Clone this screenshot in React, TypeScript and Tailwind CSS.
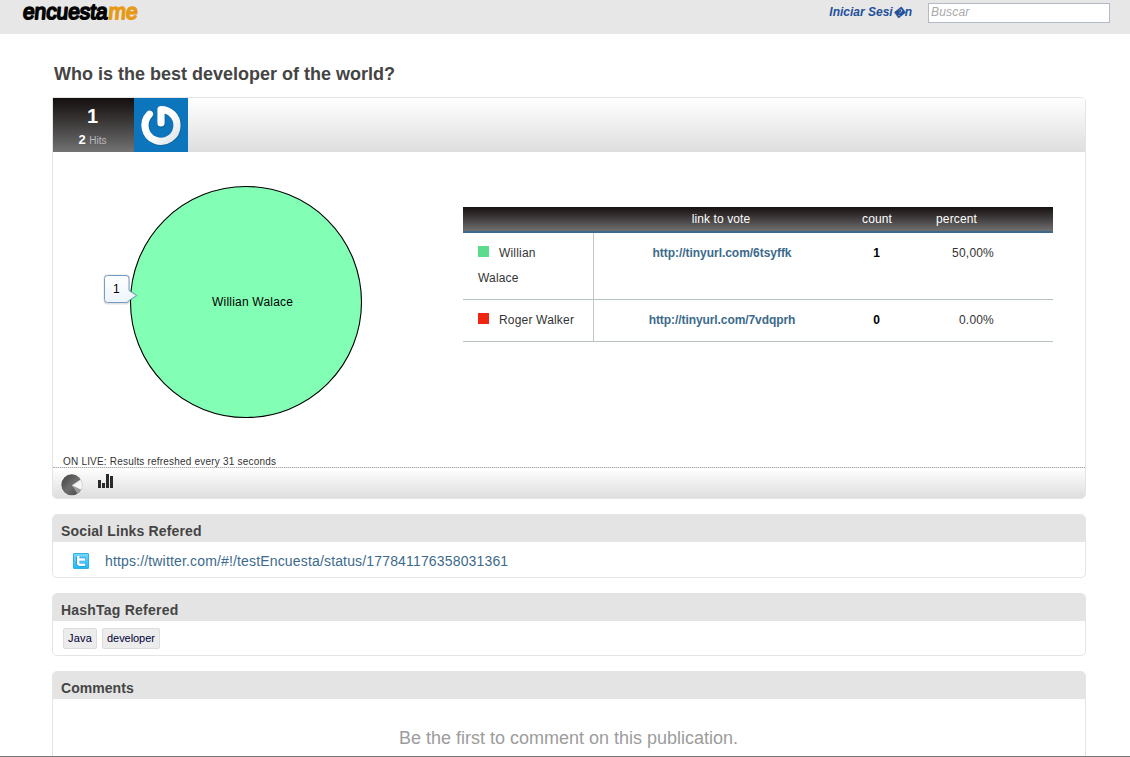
import type { ReactNode } from 'react';

const results = [
  { name: 'Willian Walace', swatch: 'bg-[#5bdb8c]', url: 'http://tinyurl.com/6tsyffk', tracking: 'tracking-[-0.04px]', count: 1, percent: '50,00%', height: 'h-[67px]' },
  { name: 'Roger Walker', swatch: 'bg-[#ee2611]', url: 'http://tinyurl.com/7vdqprh', tracking: 'tracking-[-0.08px]', count: 0, percent: '0.00%', height: 'h-[42px]' },
];

function Logo() {
  return (
    <svg width="120" height="28" viewBox="0 0 120 28" className="block overflow-visible" aria-label="encuestame">
      <g
        transform="translate(2.500 19.300) skewX(-5)"
        fontFamily="'Liberation Sans', Arial, sans-serif"
        fontSize="22"
        strokeWidth="1.800"
        strokeLinejoin="round"
      >
        <text x="0" y="0" fill="#050505" stroke="#050505" textLength="84.500" lengthAdjust="spacingAndGlyphs">encuesta</text>
        <text x="85.500" y="0" fill="#e69a17" stroke="#e69a17" textLength="29" lengthAdjust="spacingAndGlyphs">me</text>
      </g>
    </svg>
  );
}

function Avatar() {
  return (
    <svg width="54" height="54" viewBox="0 0 54 54" className="block bg-[#0c75bb]">
      <defs>
        <linearGradient id="ring" x1="0" y1="0" x2="1" y2="1">
          <stop offset="0.5" stopColor="#ffffff" />
          <stop offset="1" stopColor="#dfe3e6" />
        </linearGradient>
      </defs>
      <path d="M27 25.500V11.500C36 11.500 43 18.500 43 27.200A16 16 0 1 1 15.500 16" fill="none" stroke="#075488" strokeOpacity="0.5" strokeWidth="8" strokeLinecap="round" strokeLinejoin="round" transform="translate(.4 .6)" />
      <path d="M27 25V11.500C36 11.500 43 18.500 43 27.200A16 16 0 1 1 15.500 16.200" fill="none" stroke="url(#ring)" strokeWidth="7.200" strokeLinecap="round" strokeLinejoin="round" />
    </svg>
  );
}

function Pie() {
  return (
    <svg width="260" height="234" viewBox="0 0 260 234" className="block">
      <defs>
        <linearGradient id="tip" x1="0" y1="0" x2="0" y2="1">
          <stop offset="0" stopColor="#ffffff" />
          <stop offset="1" stopColor="#edf4fd" />
        </linearGradient>
      </defs>
      <circle cx="143" cy="117" r="115.500" fill="#82ffb4" stroke="#000" strokeWidth="1.100" />
      <text x="109" y="121" fontSize="12" fill="#000" textLength="81">Willian Walace</text>
      <path d="M4.500 90.500H23Q26 90.500 26 93.500V105.500L33.500 110.500L26 115.500Q25.500 118.500 23 118.500H4.500Q1.500 118.500 1.500 115.500V93.500Q1.500 90.500 4.500 90.500Z" fill="none" stroke="#000" strokeOpacity="0.12" strokeWidth="2" />
      <path d="M4.500 90.500H23Q26 90.500 26 93.500V105.500L33.500 110.500L26 115.500Q25.500 117.500 23 117.500H4.500Q1.500 117.500 1.500 114.500V93.500Q1.500 90.500 4.500 90.500Z" fill="url(#tip)" stroke="#759dc0" />
      <text x="10" y="108" fontSize="12" fill="#000">1</text>
    </svg>
  );
}

function PieIcon() {
  return (
    <svg width="22" height="22" viewBox="0 0 22 22" className="block">
      <defs>
        <linearGradient id="pieicon" x1="0" y1="0" x2="1" y2="1">
          <stop offset="0" stopColor="#3e3e3e" />
          <stop offset="0.5" stopColor="#6e6e6e" />
          <stop offset="1" stopColor="#444" />
        </linearGradient>
      </defs>
      <circle cx="10.800" cy="10.800" r="10.500" fill="url(#pieicon)" />
      <path d="M11 11.500L19.800 5.500A10.500 10.500 0 0 1 20 16Z" fill="#f5f5f5" stroke="#cfcfcf" strokeWidth="0.600" />
      <path d="M11 11.500L20 16Q18.500 18.800 16.500 19.800Z" fill="#9a9a9a" />
    </svg>
  );
}

function BarsIcon() {
  return (
    <svg width="15" height="14" viewBox="0 0 15 14" fill="#2a2a2a" className="block">
      <path d="M0 6h3v8H0zM4 9h3v5H4zM8 0h3v14H8zM12 2h3v12h-3z" />
    </svg>
  );
}

function TwitterIcon() {
  return (
    <svg width="16" height="16" viewBox="0 0 16 16" className="block">
      <defs>
        <linearGradient id="tw" x1="0" y1="0" x2="0" y2="1">
          <stop offset="0" stopColor="#7ad6fd" />
          <stop offset="1" stopColor="#1ab8fb" />
        </linearGradient>
      </defs>
      <rect x="0.500" y="0.500" width="15" height="15" rx="0.500" fill="url(#tw)" stroke="#2fb0e6" />
      <path d="M5 3.500V10Q5 11.800 7 11.800H12.500M5 6.200H12.500" fill="none" stroke="#1793cc" strokeWidth="3.600" />
      <path d="M5.200 3V10Q5.200 11.800 7 11.800H12.200M5.200 6.500H12.200" fill="none" stroke="#fff" strokeWidth="2.500" />
    </svg>
  );
}

function Section({ title, tracking, className, children }: { title: string; tracking: string; className: string; children: ReactNode }) {
  return (
    <section className={`overflow-hidden rounded-[5px] border border-[#e4e4e4] ${className}`}>
      <h2 className={`h-[27px] bg-[#e4e4e4] pl-2 text-sm leading-8 font-bold text-[#444] ${tracking}`}>{title}</h2>
      {children}
    </section>
  );
}

export default function App() {
  return (
    <div className="flex h-[757px] w-[1130px] flex-col overflow-hidden border-b border-[#777] bg-white font-['Liberation_Sans',Arial,sans-serif] text-[#333]">
      <header className="flex h-[34px] shrink-0 items-start bg-[#e7e7e7] pr-5 pl-5">
        <Logo />
        <a className="mt-1 mr-4 ml-auto text-xs leading-4 font-bold text-[#23509a] italic">Iniciar Sesi�n</a>
        <input
          placeholder="Buscar"
          className="mt-[3px] h-5 w-[182px] border border-[#b3b9c9] bg-white px-[2px] pb-0.5 text-xs tracking-[0.2px] italic outline-none placeholder:text-[#a9a9a9]"
        />
      </header>

      <main className="flex grow flex-col px-[52px] pr-11">
        <h1 className="mt-[29px] ml-0.5 h-[34px] text-lg leading-[22px] font-bold whitespace-nowrap text-[#444]">
          Who is the best developer of the world?
        </h1>

        <section className="flex h-[402px] shrink-0 flex-col overflow-hidden rounded-[5px] rounded-tl-none border border-[#e4e4e4]">
          <div className="flex h-[54px] shrink-0 bg-linear-to-b from-white to-[#dedede]">
            <div className="w-[81px] bg-linear-to-b from-[#151010] to-[#737373] pr-0.5 text-center text-white">
              <div className="pt-[7px] text-xl leading-[22px] font-bold">1</div>
              <div className="pt-[5px] text-[13px] leading-4 font-bold">
                2 <span className="text-[10px] font-normal text-[#bbb]">Hits</span>
              </div>
            </div>
            <Avatar />
          </div>

          <div className="flex grow">
            <div className="flex w-[410px] flex-col pt-[33px] pl-[50px]">
              <Pie />
            </div>
            <div className="w-[590px] pt-[55px] text-xs">
              <div className="grid h-[26px] grid-cols-[131px_254px_58px_147px] border-b-2 border-[#3c6a8c] bg-linear-to-b from-[#181112] to-[#717171] text-center leading-[25px] text-white">
                <span />
                <span className="tracking-[0.1px]">link to vote</span>
                <span className="tracking-[0.1px]">count</span>
                <span className="pl-[30px] text-left tracking-[0.15px]">percent</span>
              </div>
              {results.map((r) => (
                <div
                  key={r.name}
                  className={`grid grid-cols-[131px_254px_57px_148px] border-b border-[#b7c0c3] text-center leading-[25px] ${r.height}`}
                >
                  <div className="border-r border-[#c1c6c8] pt-2 pl-[15px] text-left">
                    <div className="w-[100px] tracking-[0.18px]">
                      <span className={`mr-2.5 inline-block size-[11px] ${r.swatch}`} />
                      {r.name}
                    </div>
                  </div>
                  <a className={`pt-2 pl-0.5 font-bold text-[#3c6a8c] ${r.tracking}`}>{r.url}</a>
                  <span className="pt-2 font-bold text-black">{r.count}</span>
                  <span className="pt-2 pr-[59px] text-right tracking-[0.2px]">{r.percent}</span>
                </div>
              ))}
            </div>
          </div>

          <p className="h-[11px] shrink-0 pl-2.5 text-[10px] leading-3 tracking-[0.2px] whitespace-nowrap">
            ON LIVE: Results refreshed every 31 seconds
          </p>
          <div className="flex h-[31px] shrink-0 items-start border-t border-dotted border-[#aaa] bg-linear-to-b from-white to-[#dedede] pl-2">
            <div className="pt-1.5"><PieIcon /></div>
            <div className="pt-1.5 pl-[15px]"><BarsIcon /></div>
          </div>
        </section>

        <Section title="Social Links Refered" tracking="tracking-[0.15px]" className="mt-[15px] h-16 shrink-0">
          <div className="flex items-start pt-[11px] pl-5">
            <TwitterIcon />
            <a className="ml-4 text-sm leading-4 tracking-[0.16px] text-[#3c6a8c]">https://twitter.com/#!/testEncuesta/status/177841176358031361</a>
          </div>
        </Section>

        <Section title="HashTag Refered" tracking="tracking-[0.22px]" className="mt-[15px] h-[63px] shrink-0">
          <div className="flex gap-[5px] pt-[7px] pl-2.5 text-[11px] leading-[19px] text-[#003]">
            <a className="h-[21px] w-[34px] rounded-xs border border-[#dcdcdc] bg-[#ececec] px-1 tracking-[0.2px]">Java</a>
            <a className="h-[21px] w-[58px] rounded-xs border border-[#dcdcdc] bg-[#ececec] px-1 tracking-[-0.05px]">developer</a>
          </div>
        </Section>

        <Section title="Comments" tracking="tracking-[0.05px]" className="mt-[15px] h-[120px] shrink-0">
          <p className="pt-7 pr-px text-center text-lg leading-[22px] text-[#9c9c9c]">Be the first to comment on this publication.</p>
        </Section>
      </main>
    </div>
  );
}
